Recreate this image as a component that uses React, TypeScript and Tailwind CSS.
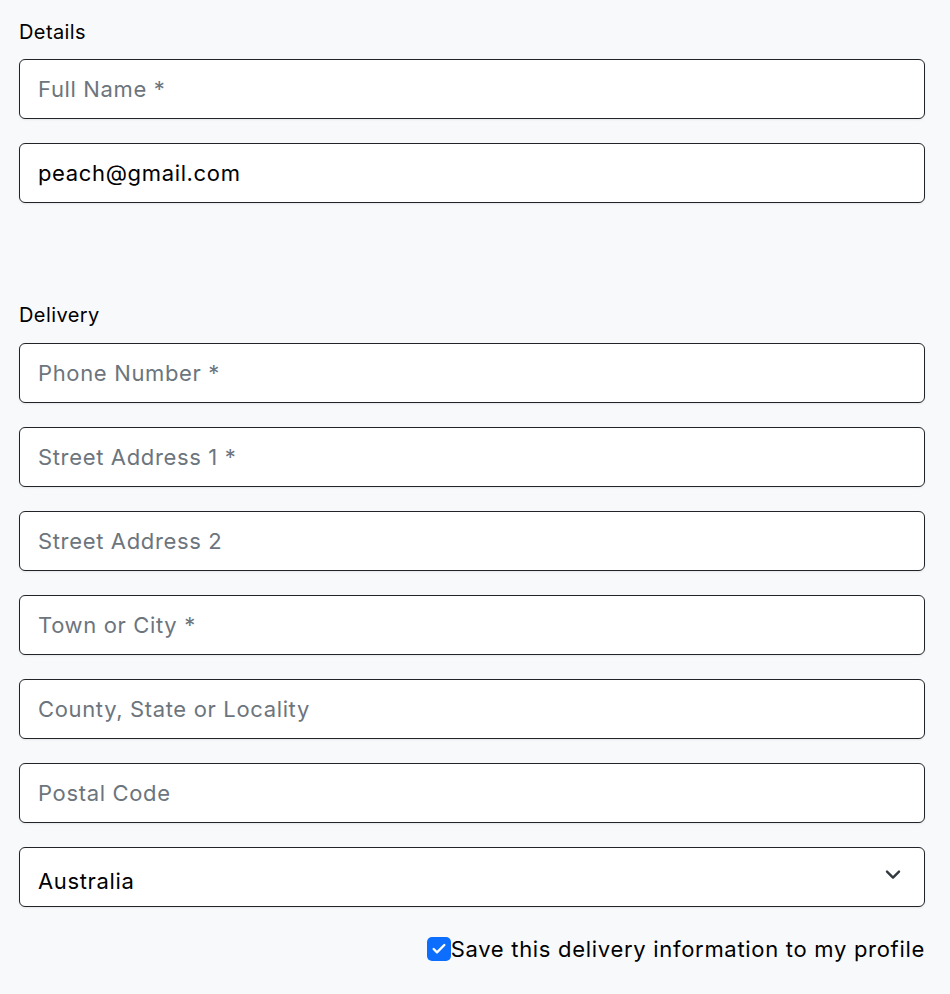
import { ChevronDown, Check } from "lucide-react";

const inputClass =
  "w-full h-[60px] rounded-[6px] border border-[#212529] bg-white px-[18px] text-[22px] tracking-[0.65px] text-black placeholder:text-[#6c757d] shadow-[0_1px_2px_rgba(0,0,0,0.08)] outline-none";

export default function App() {
  return (
    <div
      className="min-h-[994px] bg-[#f8f9fa] px-[19px] pt-[19px] text-black"
      style={{ fontFamily: "Inter, 'Noto Sans', sans-serif" }}
    >
      <div className="w-[906px]">
        <p className="text-[20px] leading-[27px] tracking-[0.4px] mb-[13px]">Details</p>
        <div className="flex flex-col gap-[24px]">
          <input className={inputClass} placeholder="Full Name *" />
          <input className={inputClass} defaultValue="peach@gmail.com" />
        </div>

        <p className="text-[20px] leading-[27px] tracking-[0.4px] mt-[99px] mb-[14px]">Delivery</p>
        <div className="flex flex-col gap-[24px]">
          <input className={inputClass} placeholder="Phone Number *" />
          <input className={inputClass} placeholder="Street Address 1 *" />
          <input className={inputClass} placeholder="Street Address 2" />
          <input className={inputClass} placeholder="Town or City *" />
          <input className={inputClass} placeholder="County, State or Locality" />
          <input className={inputClass} placeholder="Postal Code" />
          <div className="relative">
            <select
              className={`${inputClass} appearance-none pt-[9px]`}
              defaultValue="Australia"
            >
              <option>Australia</option>
            </select>
            <ChevronDown
              className="pointer-events-none absolute right-[20px] top-1/2 -translate-y-[60%] text-[#343a40]"
              size={24}
              strokeWidth={2.4}
            />
          </div>
        </div>

        <label className="mt-[30px] flex items-center justify-end text-[22px] leading-[24px] tracking-[0.7px]">
          <span className="flex h-[24px] w-[24px] items-center justify-center rounded-[5px] bg-[#0d6efd]">
            <Check size={16} strokeWidth={3.5} className="text-white" />
          </span>
          <span>Save this delivery information to my profile</span>
        </label>
      </div>
    </div>
  );
}
